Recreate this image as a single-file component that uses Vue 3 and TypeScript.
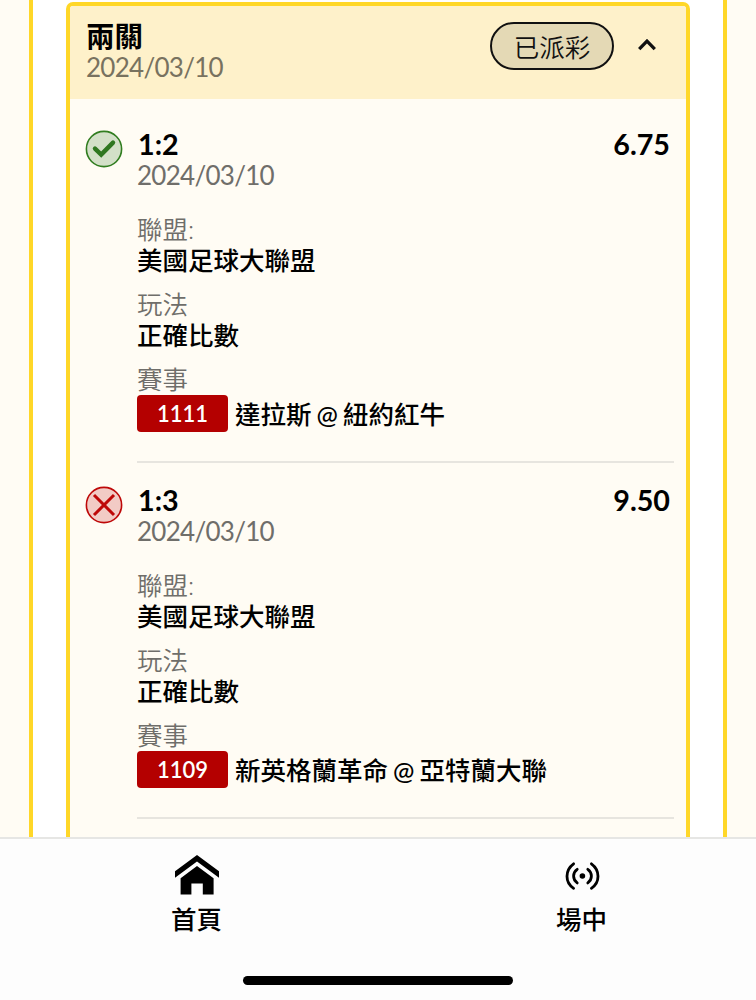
<script setup lang="ts">
interface Leg {
  pick: string
  date: string
  odds: string
  won: boolean
  league: string
  market: string
  code: string
  match: string
}

const legs: Leg[] = [
  {
    pick: '1:2',
    date: '2024/03/10',
    odds: '6.75',
    won: true,
    league: '美國足球大聯盟',
    market: '正確比數',
    code: '1111',
    match: '達拉斯 @ 紐約紅牛',
  },
  {
    pick: '1:3',
    date: '2024/03/10',
    odds: '9.50',
    won: false,
    league: '美國足球大聯盟',
    market: '正確比數',
    code: '1109',
    match: '新英格蘭革命 @ 亞特蘭大聯',
  },
]
</script>

<template>
  <div class="screen">
    <main class="content">
      <div class="panel">
        <section class="card">
          <header class="card-head">
            <div class="head-text">
              <div class="title">兩關</div>
              <div class="date">2024/03/10</div>
            </div>
            <span class="status">已派彩</span>
            <svg class="chevron" viewBox="0 0 20 14" width="20" height="14">
              <path d="M2.2 11.2 10 3.2l7.8 8" fill="none" stroke="#111" stroke-width="3.3" />
            </svg>
          </header>

          <article v-for="leg in legs" :key="leg.code" class="leg">
            <svg v-if="leg.won" class="result" viewBox="0 0 38 38">
              <circle cx="19" cy="19" r="17.6" fill="#d3e0c8" stroke="#317d20" stroke-width="1.6" />
              <path
                d="m10 18.6 6.2 6L28 12.6"
                fill="none"
                stroke="#2f7720"
                stroke-width="4.4"
                stroke-linecap="round"
              />
            </svg>
            <svg v-else class="result" viewBox="0 0 38 38">
              <circle cx="19" cy="19" r="17.6" fill="#f2cbc5" stroke="#be0808" stroke-width="1.6" />
              <path d="m9 9 20 20M29 9 9 29" fill="none" stroke="#be0808" stroke-width="3" />
            </svg>
            <div class="leg-body">
              <div class="leg-top">
                <span>{{ leg.pick }}</span>
                <span>{{ leg.odds }}</span>
              </div>
              <div class="date">{{ leg.date }}</div>
              <div class="field first">
                <div class="label">聯盟:</div>
                <div class="value">{{ leg.league }}</div>
              </div>
              <div class="field">
                <div class="label">玩法</div>
                <div class="value">{{ leg.market }}</div>
              </div>
              <div class="field">
                <div class="label">賽事</div>
                <div class="match">
                  <span class="code">{{ leg.code }}</span>
                  <span class="value">{{ leg.match }}</span>
                </div>
              </div>
            </div>
          </article>
        </section>
      </div>
    </main>

    <footer class="footer">
      <nav class="tabs">
        <a class="tab">
          <svg class="icon" viewBox="0 0 46 42" width="46" height="42">
            <path d="M23 1 45 17.2v6.6L23 7.6 1 23.8v-6.6z" />
            <path d="M23 12 39.6 24.2V40.6H28.8V29.4H17.4v11.2H6.6V24.2z" />
          </svg>
          <span>首頁</span>
        </a>
        <a class="tab">
          <svg class="icon" viewBox="0 0 46 42" width="46" height="42">
            <circle cx="23.4" cy="22" r="2.8" />
            <g fill="none" stroke="#000" stroke-width="2.8" stroke-linecap="round">
              <path d="M14.6 9.8Q8 14.6 8 22.3t6.6 12" />
              <path d="M32.4 9.8Q39 14.6 39 22.3t-6.6 12" />
              <path d="M18.2 15.3q-3.6 2.5-3.6 6.8t3.6 6.8" />
              <path d="M28.8 15.3q3.6 2.5 3.6 6.8t-3.6 6.8" />
            </g>
          </svg>
          <span>場中</span>
        </a>
      </nav>
      <div class="home-bar"></div>
    </footer>
  </div>
</template>

<style>
body {
  margin: 0;
}
</style>

<style scoped>
.screen {
  width: 756px;
  height: 1000px;
  display: flex;
  flex-direction: column;
  overflow: hidden;
  background: #fffcf4;
  color: #000;
  font-family: Lato, 'Noto Sans CJK TC', sans-serif;
  font-size: 25.5px;
}
.content {
  height: 837px;
  padding: 0 29px;
  overflow: hidden;
}
.panel {
  box-sizing: border-box;
  height: 837px;
  padding: 2px 33px 0;
  border: solid #ffd728;
  border-width: 0 4px;
  background: #fff;
}
.card {
  box-sizing: border-box;
  height: 900px;
  border: 4px solid #ffd728;
  border-radius: 7px;
  background: #fffcf4;
  overflow: hidden;
}
.card-head {
  box-sizing: border-box;
  height: 93px;
  display: flex;
  align-items: flex-start;
  padding: 15px 29px 0 16px;
  background: #fef1ca;
}
.head-text {
  flex: 1;
}
.title {
  height: 30px;
  line-height: 30px;
  font-size: 28.5px;
  font-weight: 700;
}
.date {
  height: 30px;
  line-height: 32px;
  color: #6f6e6a;
  font-size: 26px;
  letter-spacing: -0.72px;
}
.card-head .date {
  color: #78725f;
}
.status {
  box-sizing: border-box;
  width: 124px;
  height: 48px;
  margin: 1px 23px 0 0;
  border: 2px solid #111;
  border-radius: 24px;
  background: #e4d9b5;
  color: #111;
  line-height: 46px;
  text-align: center;
  font-weight: 350;
}
.chevron {
  margin-top: 17px;
}
.leg {
  box-sizing: border-box;
  height: 356.4px;
  display: flex;
  padding: 0 12px 0 15px;
}
.card-head + .leg {
  margin-top: 7.5px;
}
.result {
  flex: none;
  width: 38px;
  height: 38px;
  margin: 23.5px 14px 0 0;
}
.leg-body {
  box-sizing: border-box;
  flex: 1;
  padding-top: 22px;
  border-bottom: 2px solid #e7e5df;
}
.leg-top {
  height: 30px;
  display: flex;
  justify-content: space-between;
  padding: 0 4px 0 1px;
  line-height: 30px;
  font-size: 28.7px;
  font-weight: 700;
}
.field {
  margin-top: 13px;
}
.field.first {
  margin-top: 25px;
}
.label,
.value {
  height: 31px;
  line-height: 31px;
}
.label {
  color: #6f6e6a;
  font-weight: 350;
}
.value {
  font-weight: 500;
}
.match {
  display: flex;
  align-items: center;
  gap: 7px;
  white-space: pre;
}
.match .value {
  word-spacing: -1.4px;
  line-height: 33px;
}
.code {
  width: 91px;
  height: 37px;
  border-radius: 4px;
  background: #b40000;
  color: #fff;
  font-size: 22px;
  font-weight: 600;
  line-height: 38px;
  text-align: center;
}
.footer {
  box-sizing: border-box;
  height: 163px;
  border-top: 2px solid #e6e6e4;
  background: #fdfdfd;
}
.tabs {
  display: grid;
  grid-template-columns: 385px 385px;
  height: 137px;
  padding: 15px 0 0 4px;
  box-sizing: border-box;
}
.tab {
  display: flex;
  flex-direction: column;
  align-items: center;
  font-weight: 500;
  line-height: 32px;
}
.icon {
  margin-bottom: 7px;
}
.home-bar {
  width: 270px;
  height: 9px;
  margin: 0 auto;
  border-radius: 5px;
  background: #000;
}
</style>
